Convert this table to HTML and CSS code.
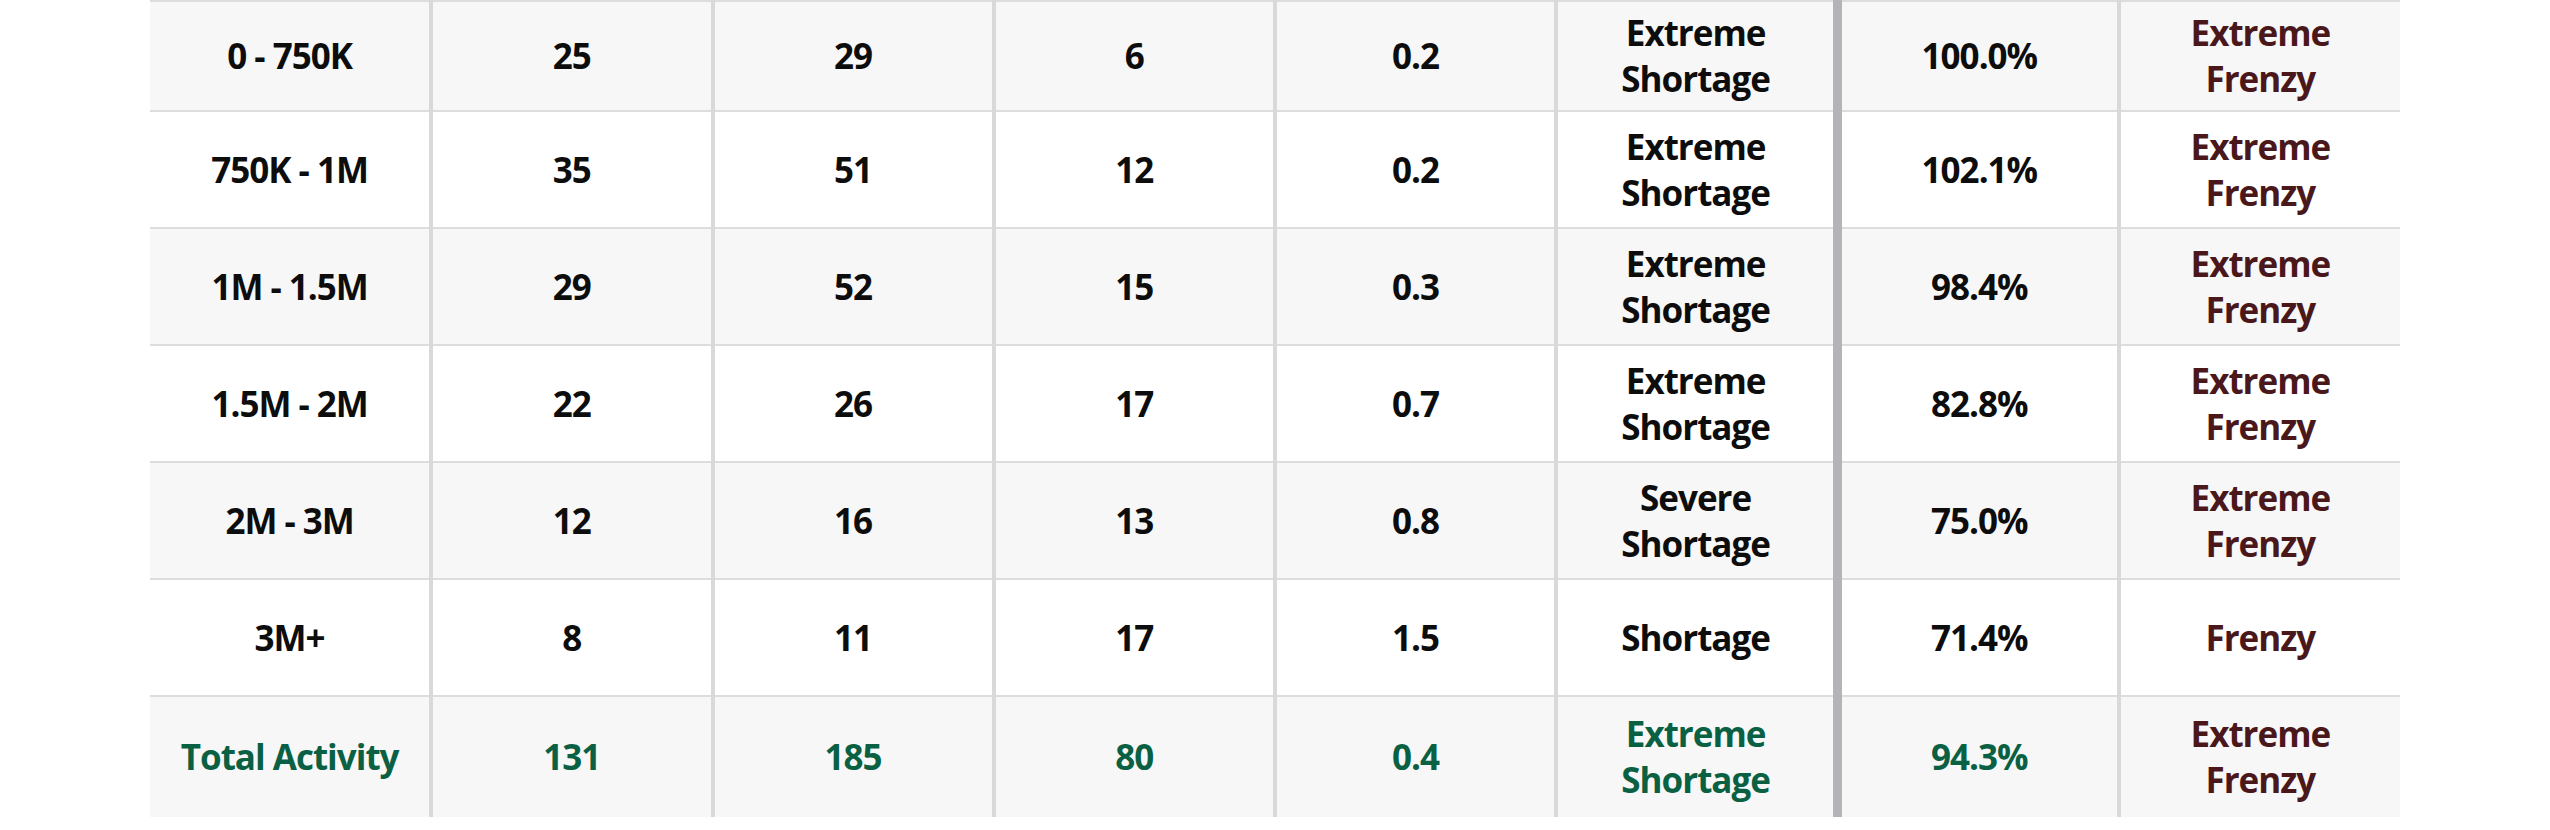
FILE: index.html
```html
<!DOCTYPE html>
<html lang="en">
<head>
<meta charset="utf-8">
<title>Market Activity</title>
<link rel="stylesheet" href="styles.css">
</head>
<body>
<div class="wrap">
<table class="market">
  <tbody>
    <tr class="shade first">
      <td>0 - 750K</td><td>25</td><td>29</td><td>6</td><td>0.2</td><td>Extreme<br>Shortage</td><td class="split">100.0%</td><td class="heat">Extreme<br>Frenzy</td>
    </tr>
    <tr>
      <td>750K - 1M</td><td>35</td><td>51</td><td>12</td><td>0.2</td><td>Extreme<br>Shortage</td><td class="split">102.1%</td><td class="heat">Extreme<br>Frenzy</td>
    </tr>
    <tr class="shade">
      <td>1M - 1.5M</td><td>29</td><td>52</td><td>15</td><td>0.3</td><td>Extreme<br>Shortage</td><td class="split">98.4%</td><td class="heat">Extreme<br>Frenzy</td>
    </tr>
    <tr>
      <td>1.5M - 2M</td><td>22</td><td>26</td><td>17</td><td>0.7</td><td>Extreme<br>Shortage</td><td class="split">82.8%</td><td class="heat">Extreme<br>Frenzy</td>
    </tr>
    <tr class="shade">
      <td>2M - 3M</td><td>12</td><td>16</td><td>13</td><td>0.8</td><td>Severe<br>Shortage</td><td class="split">75.0%</td><td class="heat">Extreme<br>Frenzy</td>
    </tr>
    <tr>
      <td>3M+</td><td>8</td><td>11</td><td>17</td><td>1.5</td><td>Shortage</td><td class="split">71.4%</td><td class="heat">Frenzy</td>
    </tr>
    <tr class="shade total">
      <td>Total Activity</td><td>131</td><td>185</td><td>80</td><td>0.4</td><td>Extreme<br>Shortage</td><td class="split">94.3%</td><td class="heat">Extreme<br>Frenzy</td>
    </tr>
  </tbody>
</table>
</div>
</body>
</html>
```
FILE: styles.css
```css
html, body {
  margin: 0;
  padding: 0;
  background: #ffffff;
}

.wrap {
  padding: 0 150px;
}

.market {
  width: 100%;
  border-collapse: collapse;
  table-layout: fixed;
  font-family: "Open Sans", "Noto Sans", sans-serif;
  font-weight: 700;
  font-size: 35px;
  line-height: 46px;
  color: #0d0d0d;
  letter-spacing: -1px;
}

.market td {
  height: 115px;
  padding: 0 8px;
  text-align: center;
  vertical-align: middle;
  border-top: 2px solid #dddddd;
  border-left: 4px solid #d9d9d9;
}

.market tr.first td {
  height: 108px;
}

.market tr.total td {
  height: 120px;
}

.market td:first-child {
  border-left: none;
}

.market td.split {
  border-left: 9px solid #b3b4b8;
}

.market tr.shade td {
  background: #f7f7f7;
}

.market td.heat {
  color: #4a181b;
}

.market tr.total td {
  color: #0a6043;
}

.market tr.total td.heat {
  color: #4a181b;
}
```
